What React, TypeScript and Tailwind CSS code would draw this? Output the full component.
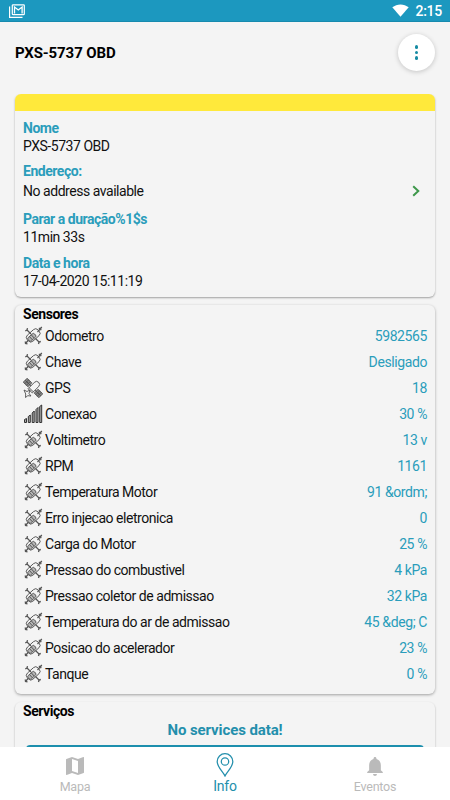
import React from 'react';

interface Sensor {
  name: string;
  value: string;
  icon?: 'engine' | 'satellite' | 'signal';
}

const sensors: Sensor[] = [
  { name: 'Odometro', value: '5982565' },
  { name: 'Chave', value: 'Desligado' },
  { name: 'GPS', value: '18', icon: 'satellite' },
  { name: 'Conexao', value: '30 %', icon: 'signal' },
  { name: 'Voltimetro', value: '13 v' },
  { name: 'RPM', value: '1161' },
  { name: 'Temperatura Motor', value: '91 &ordm;' },
  { name: 'Erro injecao eletronica', value: '0' },
  { name: 'Carga do Motor', value: '25 %' },
  { name: 'Pressao do combustivel', value: '4 kPa' },
  { name: 'Pressao coletor de admissao', value: '32 kPa' },
  { name: 'Temperatura do ar de admissao', value: '45 &deg; C' },
  { name: 'Posicao do acelerador', value: '23 %' },
  { name: 'Tanque', value: '0 %' },
];

const EngineIcon = () => (
  <svg viewBox="0 0 20 20" className="h-5 w-5 shrink-0" fill="none" stroke="#555" strokeWidth=".9">
    <path d="M4 4l4 4M12.500 12.500l3.500 3.500M14.500 6l3-3.500M5.500 14l-3 3.500" strokeWidth="1.200" />
    <path d="M2.300 4.800l1.700-.8.500-1.800M17.800 15.500l-1.800.5-.5 2M15.800 2.300l1.700.2M17.500 2.500l1.300-1.500M17.500 2.500l.5 1.700M2.300 15.500l.2 2 2 .3" strokeWidth="1.300" />
    <g transform="rotate(-42 10 10)">
      <rect x="3.300" y="5.600" width="14.500" height="8.200" rx="3.200" />
      <rect x="4" y="8" width="8.500" height="4.500" rx="1.500" fill="#b5b5b5" />
      <path d="M7 8v4.500M9.500 8v4.500" />
    </g>
  </svg>
);

const SatelliteIcon = () => (
  <svg viewBox="0 0 20 20" className="h-5 w-5 shrink-0" fill="none" stroke="#505050" strokeWidth=".9">
    <g transform="rotate(45 10 10)">
      <rect x="-1" y="7.300" width="6.500" height="5.400" fill="#888" />
      <rect x="14.500" y="7.300" width="6.500" height="5.400" fill="#888" />
      <path d="M1.200 7.300v5.400M3.400 7.300v5.400M-1 10h6.500M16.700 7.300v5.400M18.900 7.300v5.400M14.500 10H21M5.500 10h1.500M13 10h1.500" />
      <path d="M7 14V5Q7 2 10 2T13 5V14z" />
      <path d="M7 12.500h6" />
    </g>
    <path d="M1 12l3 1.500 3-1.500-1 3.500 2 2.500-3.200-.3L2.500 19.500l.2-3.500z" />
  </svg>
);

const SignalIcon = () => (
  <svg viewBox="0 0 20 20" className="h-5 w-5 shrink-0" fill="#a8a8a8" stroke="#333" strokeWidth="1">
    <path d="M1.500 15.500l2-1v4h-2zM5.300 12.500l2-1.500v7.500h-2zM9.200 9l2-2v11.500h-2zM13 5.500l2-2v15h-2zM16.700 2.500l2-1.500v17.500h-2z" />
  </svg>
);

const SensorIcon: React.FC<{ icon?: Sensor['icon'] }> = ({ icon }) => {
  switch (icon) {
    case 'satellite':
      return <SatelliteIcon />;
    case 'signal':
      return <SignalIcon />;
    default:
      return <EngineIcon />;
  }
};

const StatusBar = () => (
  <header className="flex h-[22px] shrink-0 items-center justify-between border-b border-[#178aae] bg-[#1c98bf] pr-2 pl-[9px] text-white">
    <svg viewBox="0 0 16 14" className="h-3.5 w-4" fill="none" stroke="currentColor">
      <path d="M.6 2.500v10.900h12.900" strokeWidth="1.200" />
      <rect x="3.300" y=".8" width="12" height="9.900" rx=".8" strokeWidth="1.200" />
      <path d="M5.500 9.500V3l3.800 3 3.800-3v6.500" strokeWidth="1.300" />
    </svg>
    <div className="flex items-center gap-[6px]">
      <svg viewBox="0 0 17 13" className="h-[13px] w-[17px]" fill="currentColor">
        <path d="M.3 3.300C5-.6 12-.6 16.700 3.300L8.500 12.800z" />
      </svg>
      <span className="mt-px text-[14px] leading-none font-medium tracking-[-0.25px]">2:15</span>
    </div>
  </header>
);

interface FieldProps {
  label: string;
  value: string;
  className?: string;
  valueClassName?: string;
  children?: React.ReactNode;
}

const Field: React.FC<FieldProps> = ({ label, value, className = '', valueClassName = '', children }) => (
  <div className={className}>
    <div className="font-bold text-[#2a9dbb]">{label}</div>
    <div className={`flex items-center justify-between ${valueClassName}`}>
      <span>{value}</span>
      {children}
    </div>
  </div>
);

const BottomNav = () => (
  <nav className="grid h-[53px] shrink-0 grid-cols-3 bg-white text-[12.5px] leading-4 tracking-[-0.2px] text-[#bababa]">
    <div className="flex flex-col items-center pt-[10px]">
      <svg viewBox="3 3 18 18" className="h-[18px] w-[18px]" fill="currentColor">
        <path d="M20.500 3l-.16.030L15 5.100 9 3 3.360 4.900c-.21.070-.36.250-.36.480V20.500c0 .28.220.5.500.5l.16-.030L9 18.900l6 2.100 5.640-1.900c.21-.070.360-.250.360-.480V3.500c0-.28-.220-.5-.5-.5zM15 19l-6-2.110V5l6 2.110V19z" />
      </svg>
      <span className="mt-1">Mapa</span>
    </div>
    <div className="flex flex-col items-center pt-[6px] text-[#238fac]">
      <svg viewBox="0 0 18 24" className="h-6 w-[18px]" fill="none" stroke="currentColor" strokeWidth="1.250">
        <path d="M9 23C7 18.500 1.200 14.300 1.200 8.500a7.800 7.800 0 0 1 15.600 0C16.800 14.300 11 18.500 9 23z" />
        <circle cx="9" cy="8.500" r="3.700" />
      </svg>
      <span className="mt-px text-sm leading-4">Info</span>
    </div>
    <div className="flex flex-col items-center pt-[10px]">
      <svg viewBox="4 2.500 16 19.500" className="h-[19px] w-4" fill="currentColor">
        <path d="M12 22c1.100 0 2-.9 2-2h-4c0 1.100.890 2 2 2zm6-6v-5c0-3.070-1.640-5.640-4.500-6.320V4c0-.83-.670-1.500-1.500-1.500s-1.500.67-1.500 1.500v.68C7.630 5.360 6 7.920 6 11v5l-2 2v1h16v-1l-2-2z" />
      </svg>
      <span className="mt-[3px]">Eventos</span>
    </div>
  </nav>
);

export default function App() {
  return (
    <div className="flex h-[800px] w-[450px] flex-col overflow-hidden bg-[#f4f4f4] font-['Roboto',sans-serif] text-sm leading-[18px] tracking-[-0.46px] text-[#111]">
      <StatusBar />

      <div className="flex h-[72px] shrink-0 items-start justify-between pr-[15px] pl-[15px]">
        <h1 className="mt-[21px] text-[15px] leading-5 font-bold tracking-[-0.1px] text-black">PXS-5737 OBD</h1>
        <button
          aria-label="Menu"
          className="mt-[12px] flex h-[37px] w-[37px] flex-col items-center justify-center gap-[2px] rounded-full bg-white shadow-[0_1px_5px_rgba(0,0,0,0.2)]"
        >
          <span className="h-[3.600px] w-[3.600px] rounded-full bg-[#168ba3]" />
          <span className="h-[3.600px] w-[3.600px] rounded-full bg-[#168ba3]" />
          <span className="h-[3.600px] w-[3.600px] rounded-full bg-[#168ba3]" />
        </button>
      </div>

      <main className="flex min-h-0 flex-1 flex-col gap-2 overflow-hidden px-[15px]">
        {/* Vehicle details */}
        <section className="h-[203px] shrink-0 overflow-hidden rounded-md shadow-[0_1px_2px_rgba(0,0,0,0.35)]">
          <div className="h-[17px] bg-[#ffe93b]" />
          <div className="px-2 pt-2">
            <Field label="Nome" value="PXS-5737 OBD" />
            <Field label="Endereço:" value="No address available" className="mt-[7px]" valueClassName="mt-[2px]">
              <svg viewBox="0 0 8 12" className="mr-[7px] h-3 w-2" fill="none" stroke="#3e984b" strokeWidth="2">
                <path d="M1.200 1.200L6.300 6l-5.100 4.800" />
              </svg>
            </Field>
            <Field label="Parar a duração%1$s" value="11min 33s" className="mt-[10px]" />
            <Field label="Data e hora" value="17-04-2020 15:11:19" className="mt-[8px]" />
          </div>
        </section>

        {/* Sensors */}
        <section className="h-[389px] shrink-0 rounded-md px-2 shadow-[0_1px_3px_rgba(0,0,0,0.35)]">
          <h2 className="font-bold text-black">Sensores</h2>
          <ul>
            {sensors.map((sensor) => (
              <li key={sensor.name} className="flex h-[26px] items-center">
                <span className="mr-[2px] flex">
                  <SensorIcon icon={sensor.icon} />
                </span>
                <span>{sensor.name}</span>
                <span className="ml-auto tracking-[-0.4px] text-[#2a9dbb]">{sensor.value}</span>
              </li>
            ))}
          </ul>
        </section>

        {/* Services */}
        <section className="h-[80px] shrink-0 rounded-md px-2 shadow-[0_1px_2px_rgba(0,0,0,0.3)]">
          <h2 className="font-bold text-black">Serviços</h2>
          <p className="text-center text-[15px] leading-5 font-bold tracking-[-0.1px] text-[#238fac]">No services data!</p>
          <div className="mx-[3px] mt-[5px] h-8 rounded-sm border-t-2 border-[#1c8fad]" />
        </section>
      </main>

      <BottomNav />
    </div>
  );
}
